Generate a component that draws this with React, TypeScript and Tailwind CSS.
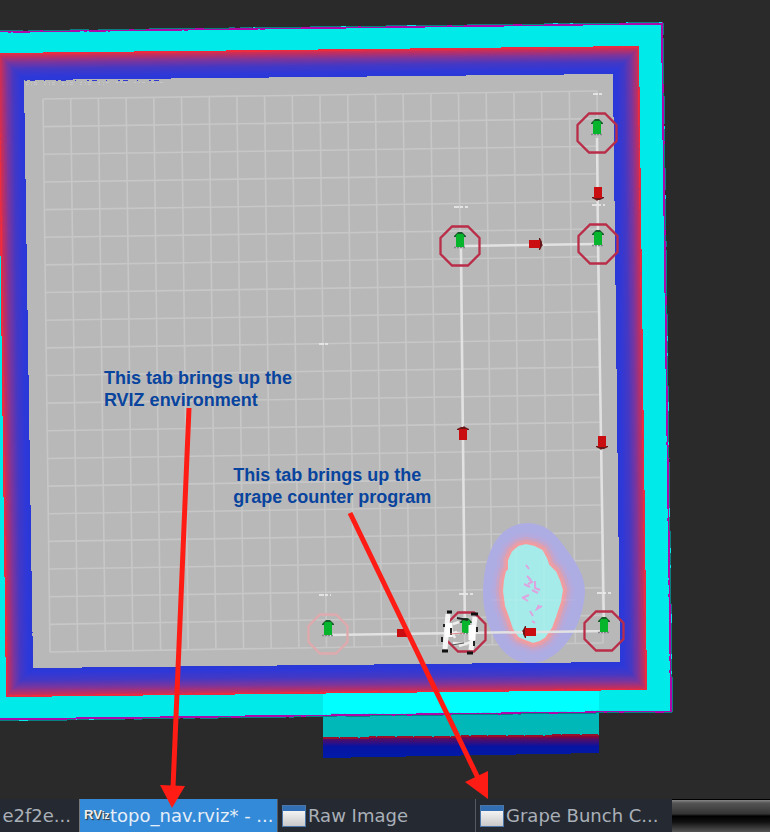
import React from 'react';

type Point = [number, number];

const GRID_CELLS = 20;
const GRID: Point[] = [[43, 99], [597, 91], [603, 643], [50, 652]];

const mix = (a: Point, b: Point, t: number): Point => [
  a[0] + (b[0] - a[0]) * t,
  a[1] + (b[1] - a[1]) * t,
];

function FloorGrid() {
  const [tl, tr, br, bl] = GRID;
  const steps = Array.from({ length: GRID_CELLS + 1 }, (_, i) => i / GRID_CELLS);
  return (
    <g stroke="#c7c7c7" strokeWidth="1.6">
      {steps.map((t) => {
        const [a, b, c, d] = [mix(tl, tr, t), mix(bl, br, t), mix(tl, bl, t), mix(tr, br, t)];
        return (
          <g key={t}>
            <line x1={a[0]} y1={a[1]} x2={b[0]} y2={b[1]} />
            <line x1={c[0]} y1={c[1]} x2={d[0]} y2={d[1]} />
          </g>
        );
      })}
    </g>
  );
}

function Waypoint({ x, y, faint = false }: { x: number; y: number; faint?: boolean }) {
  return (
    <g transform={`translate(${x} ${y})`}>
      <path
        d="M-8-19.500H8L19.500-8V8L8 19.500H-8L-19.500 8V-8Z"
        fill="none"
        stroke={faint ? '#dfa9ad' : '#b92d48'}
        strokeWidth="2.3"
      />
      <g transform="translate(0 -5)">
        <path d="M-6 6.500H6" stroke="#85858e" strokeWidth="1.4" strokeDasharray="2 1" />
        <path d="M-6-5L-2-9H2L6-5V-4H-6Z" fill="#155e29" />
        <path d="M-3-7H3L4-5V6H-4V-5Z" fill="#07b52c" />
      </g>
    </g>
  );
}

function EdgeArrow({ x, y, turn }: { x: number; y: number; turn: number }) {
  return (
    <g transform={`translate(${x} ${y}) rotate(${turn})`}>
      <path d="M-6-4L-2-6H0L1-7L2-6L6-4V-3H-6Z" fill="#681719" />
      <path d="M-4-4H4V7H-4Z" fill="#c90d10" />
    </g>
  );
}

function Robot() {
  return (
    <g>
      <path d="M453 624L459 622M451 634L457 632M453 643L463 644M450 628L455 638M459 646L471 642" stroke="#eee" strokeWidth="2.5" />
      <path d="M448 614L445 649M475 617L471 650" stroke="#f5f5f5" strokeWidth="5" />
      <path d="M449 623V637M472 625V640" stroke="#fff" strokeWidth="7" />
      <path d="M447 612H452M471 614H478M442 651H448M467 653H473" stroke="#111" strokeWidth="3" />
      <path d="M457 618L468 620M451 628V635M444 624V627M442 637V642M477 627V632M474 641V646" stroke="#222" strokeWidth="2" />
      <path d="M450 634L464 633" stroke="#df8a8d" strokeWidth="1" />
      <path d="M452 645L464 643" stroke="#555" strokeWidth="1" />
    </g>
  );
}

const CORE =
  'M526 543L535 545L543 549L548 558L550 564L557 571L561 580L564 590L562 602L557 617L553 628L546 638L540 642L533 644L525 641L518 638L512 629L508 617L504 606L502 591L503 580L505 571L507 569V560L511 551L518 545Z';

function Obstacle() {
  return (
    <g>
      <path d="M527 523C544 523 554 532 564 546C575 561 585 574 585 592C583 626 562 661 533 663C507 664 494 643 487 620C482 603 482 589 485 570C490 542 504 524 527 523Z" fill="#adade4" />
      <g fill="none" strokeLinejoin="round">
        <path d={CORE} stroke="#bda8d6" strokeWidth="20" strokeOpacity=".5" />
        <path d={CORE} stroke="#d0a2bd" strokeWidth="13" strokeOpacity=".6" />
        <path d={CORE} stroke="#e89da6" strokeWidth="7" strokeOpacity=".8" />
      </g>
      <path d={CORE} fill="#a5ebe9" stroke="#f59c9f" strokeWidth="2" />
      <path d="M526 565L529 569M529 579L532 582L528 584M524 584L530 587M527 576L531 580M535 581V588L540 590M522 598L529 595M523 598L528 601M532 590L538 593M539 605L537 609L542 606M530 611L533 616M532 621L535 623" fill="none" stroke="#dfa3df" strokeWidth="2" />
      <path d="M491 600H575M516 548V640M544 550V640" stroke="#ffffff" strokeOpacity=".12" />
    </g>
  );
}

function Scene() {
  const stops = (
    <>
      <stop offset="0" stopColor="#e82c43" />
      <stop offset=".12" stopColor="#bd2f62" />
      <stop offset=".32" stopColor="#7d359b" />
      <stop offset=".58" stopColor="#4438c4" />
      <stop offset=".85" stopColor="#2e38d8" />
      <stop offset="1" stopColor="#2a38d8" />
    </>
  );
  return (
    <svg viewBox="0 0 770 799" className="pointer-events-none relative z-10 block w-full overflow-visible" role="img" aria-label="RViz map with topological navigation nodes">
      <defs>
        <linearGradient id="top" gradientUnits="userSpaceOnUse" x1="320" y1="50" x2="320.3" y2="77">{stops}</linearGradient>
        <linearGradient id="bottom" gradientUnits="userSpaceOnUse" x1="320" y1="694" x2="319.7" y2="665">{stops}</linearGradient>
        <linearGradient id="left" gradientUnits="userSpaceOnUse" x1="2" y1="370" x2="28" y2="369.7">{stops}</linearGradient>
        <linearGradient id="right" gradientUnits="userSpaceOnUse" x1="643.5" y1="370" x2="616.5" y2="370.3">{stops}</linearGradient>
        <linearGradient id="reflection" x1="0" y1="0" x2="0" y2="1">
          <stop offset="0" stopColor="#a0001c" />
          <stop offset=".2" stopColor="#500d68" />
          <stop offset=".5" stopColor="#0714a2" />
          <stop offset="1" stopColor="#001aa8" />
        </linearGradient>
      </defs>

      <g shapeRendering="crispEdges">
        <path d="M323 712L599 710V735L323 738Z" fill="#00b8b8" />
        <path d="M323 738L599 735V753L323 758Z" fill="url(#reflection)" />
        <path d="M323 738L599 735" stroke="#99102a" strokeWidth="2" strokeDasharray="16 1 7 0 11 2" />

        <path d="M-8 31L663 22L673 712L-8 721Z" fill="#00eaea" />
        <path d="M323 690L599 687V712L323 716Z" fill="#00ffff" />
        <path d="M-8 32L662 23.500L671 711.500L-8 719.500" fill="none" stroke="#ad08a9" strokeWidth="2" />
        <path d="M-8 31L663 22.500L672.500 712L-8 721" fill="none" stroke="#087f81" strokeWidth="1" strokeDasharray="31 5 12 3 46 9" />
        <path d="M-8 33L660 25.500M662 160L670 710L-8 718" fill="none" stroke="#00eaea" strokeWidth="1" strokeDasharray="2 5 9 3 2 17" />

        <path d="M-2 53L639 46L613 74L24 80Z" fill="url(#top)" />
        <path d="M639 46L647 690L620 662L613 74Z" fill="url(#right)" />
        <path d="M647 690L6 697L33 668L620 662Z" fill="url(#bottom)" />
        <path d="M6 697L-2 53L24 80L33 668Z" fill="url(#left)" />
        <path d="M-2 54L638 47L646 689L7 696L-1 54" fill="none" stroke="#ef2c3d" strokeWidth="1" strokeDasharray="37 2 15 1 4 3" />
        <path d="M24 80L613 74L620 662L33 668Z" fill="#b8b8b8" />
        <path d="M25 81L165 80M28 520L33 660M190 667L475 664M620 560V655" fill="none" stroke="#3038cf" strokeWidth="1" strokeDasharray="2 3 5 9 1 11" />
        <path d="M26 83L165 82M26 85L105 84" fill="none" stroke="#c7c7c7" strokeWidth="1" strokeDasharray="2 3 1 2 3 7" />
      </g>

      <FloorGrid />
      <Obstacle />

      <g stroke="#e2e2e2" strokeWidth="2.5" fill="none">
        <path d="M597 138L598 244L604 631L329 635" />
        <path d="M465 246L598 244M461 247L465 632" />
      </g>
      <g stroke="#efefef" strokeWidth="1.5" strokeDasharray="5 1 3 2">
        <path d="M454 207H468M592 205H605M319 595H331M459 594H473M597 593H611M319 344H328M593 94H604" />
      </g>

      <Waypoint x={597} y={133} />
      <Waypoint x={460} y={246} />
      <Waypoint x={598} y={244} />
      <Waypoint x={466} y={632} />
      <Waypoint x={604} y={631} />
      <Waypoint x={328} y={634} faint />
      <EdgeArrow x={598} y={194} turn={180} />
      <EdgeArrow x={536} y={244} turn={90} />
      <EdgeArrow x={463} y={433} turn={0} />
      <EdgeArrow x={602} y={443} turn={180} />
      <EdgeArrow x={529} y={632} turn={-90} />
      <path d="M397 629H407V637H397Z" fill="#c90d10" />
      <Robot />

      <g stroke="#ff1c14" strokeWidth="5" fill="#ff1c14">
        <path d="M189 408L173 788M350 513L478 778" />
        <path d="M160 785L185 786L172 808ZM465 782L488 771L488 799Z" stroke="none" />
      </g>
    </svg>
  );
}

function WindowIcon() {
  return (
    <svg viewBox="0 0 24 22" className="h-[22px] w-6 shrink-0" aria-hidden="true">
      <defs>
        <linearGradient id="pane" x1="0" y1="0" x2="0" y2="1">
          <stop offset="0" stopColor="#f3f3f3" />
          <stop offset="1" stopColor="#c9c9c9" />
        </linearGradient>
      </defs>
      <path d="M0 0H24V22H0Z" fill="#4a76a8" />
      <path d="M1 1H23V6H1Z" fill="#316eb4" />
      <path d="M1 6H23V21H1Z" fill="url(#pane)" />
    </svg>
  );
}

function RvizIcon() {
  return (
    <span aria-hidden="true" className="flex w-6 shrink-0 items-baseline font-['Liberation_Sans',sans-serif] text-[13px] font-bold text-[#eee] [text-shadow:1px_1px_1px_#333]">
      RV<span className="text-[10px]">iz</span>
    </span>
  );
}

const tab = 'flex min-w-0 items-center gap-[2px] overflow-hidden whitespace-nowrap border-l pl-1 text-left';
const idle = 'border-[#555a60] bg-[#252a32] text-[#aab0b8]';
const note = "absolute z-20 font-['Liberation_Sans',Arial,sans-serif] text-[18px] leading-[22px] font-bold text-[#08449e]";

export default function App() {
  return (
    <main className="flex min-h-screen flex-col overflow-hidden bg-[#2a2a2a]">
      <section className="relative">
        <Scene />
        <p className={`${note} top-[45.9%] left-[13.5%]`}>
          This tab brings up the<br />RVIZ environment
        </p>
        <p className={`${note} top-[58.1%] left-[30.3%]`}>
          This tab brings up the<br />grape counter program
        </p>
      </section>
      <nav aria-label="Open windows" className="grid h-[33px] grid-cols-[79px_198px_198px_197px_1fr] font-['DejaVu_Sans',sans-serif] text-[18px] leading-[22px]">
        <button type="button" className="flex items-center justify-end bg-[#252a32] pr-2 whitespace-nowrap text-[#aab0b8]">e2f2e...</button>
        <button type="button" className={`${tab} border-[#777] bg-[#338ad8] text-[#e6eef7]`}>
          <RvizIcon />topo_nav.rviz* - ...
        </button>
        <button type="button" className={`${tab} ${idle}`}><WindowIcon />Raw Image</button>
        <button type="button" className={`${tab} ${idle}`}><WindowIcon />Grape Bunch C...</button>
        <div className="border-t border-black bg-[linear-gradient(#888_0px,#555_3px,#333_14px,#000_16px,#111_22px,#555_32px)]" />
      </nav>
    </main>
  );
}
